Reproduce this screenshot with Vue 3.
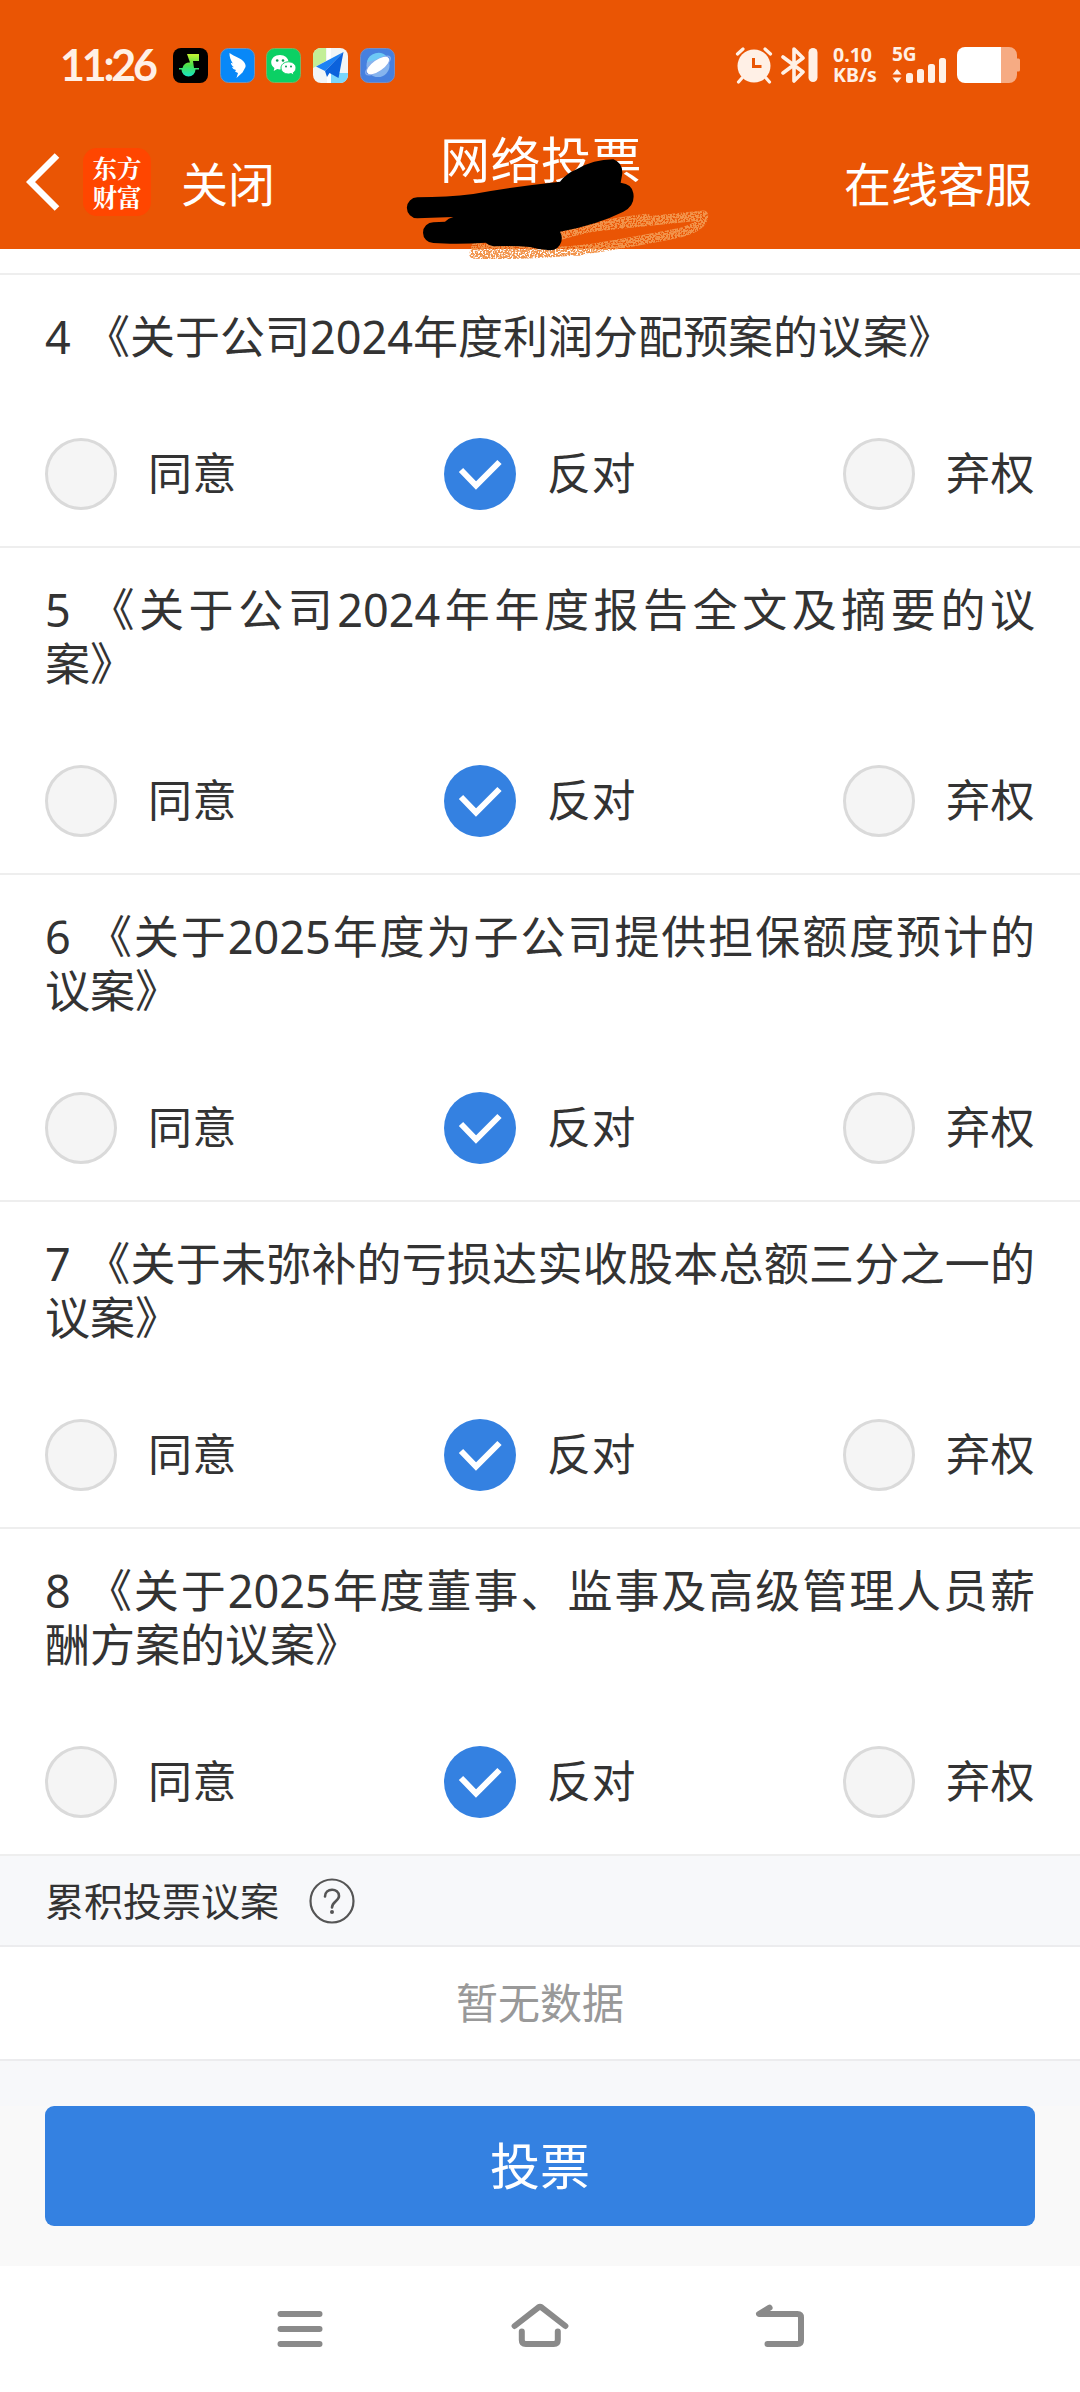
<template>
  <div class="page">
    <header class="header">
      <div class="status">
        <div class="status__left">
          <span class="status__time">11:26</span>
          <div class="status__apps">
            <svg class="app-icon" viewBox="0 0 35 35">
              <defs>
                <linearGradient id="note" x1="0" y1="0" x2="0" y2="1">
                  <stop offset="0" stop-color="#c6f432" />
                  <stop offset="0.5" stop-color="#4be04a" />
                  <stop offset="1" stop-color="#16e6c8" />
                </linearGradient>
              </defs>
              <rect width="35" height="35" rx="8" fill="#000" />
              <path d="M14 6h12v7h-6l1 7h5v1.500h-3.500a7 7 0 0 1-14 0H6V20h3.500a7 7 0 0 1 7.500-5.500z" fill="url(#note)" />
            </svg>
            <svg class="app-icon" viewBox="0 0 35 35">
              <rect x=".5" y=".5" width="34" height="34" rx="8" fill="#0888f8" stroke="#7b8fb0" />
              <path d="M9.500 5c5 3.500 12 5.500 14.500 9 1.500 2 1.800 3.500 1.500 5l-3 5.500-6 5.500 1.500-5-3-1.500 1-1.500c-2-.5-3.500-1.500-4-3l2 .2c-2-1.500-3-3-3.200-4.500l2 .8c-2-3-3.500-7-3.300-10.500z" fill="#fff" />
            </svg>
            <svg class="app-icon" viewBox="0 0 35 35">
              <rect x=".5" y=".5" width="34" height="34" rx="8" fill="#0bd064" stroke="#7fb060" />
              <path d="M14 7c-5 0-8.800 3.200-8.800 7.300 0 2.400 1.200 4.300 3.200 5.600L7.700 23l3.500-1.900c3 .7 5.800.1 8-1.600 2-1.500 3.300-3.200 3.300-5.400C22.500 10.200 18.800 7 14 7z" fill="#fff" />
              <path d="M22.500 13.800c-4.200 0-7.500 2.700-7.500 6.100s3.300 6.100 7.500 6.100c.9 0 1.800-.1 2.600-.4l2.900 1.500-.7-2.500c1.700-1.200 2.700-2.800 2.700-4.700 0-3.400-3.300-6.100-7.500-6.100z" fill="#fff" stroke="#0bd064" />
              <g fill="#0a9c50">
                <circle cx="11.200" cy="12.500" r="1.300" />
                <circle cx="17" cy="12.500" r="1.300" />
                <circle cx="20" cy="18.500" r="1" />
                <circle cx="25" cy="18.500" r="1" />
              </g>
            </svg>
            <svg class="app-icon" viewBox="0 0 35 35">
              <rect width="35" height="35" rx="8" fill="#f2f5f6" />
              <path d="M8 0h5v13L0 20V8a8 8 0 0 1 8-8z" fill="#c3ef98" />
              <path d="M18 25h17v2a8 8 0 0 1-8 8h-9z" fill="#7ad6fb" />
              <path d="M14 0h4v35h-4z" fill="#fff" />
              <path d="M30.500 4L3 18.500l9 4.500z" fill="#1c82f4" />
              <path d="M30.500 4L12 23l2 6 2.500-4 9 5z" fill="#0b62dc" />
            </svg>
            <svg class="app-icon" viewBox="0 0 35 35">
              <rect x=".5" y=".5" width="34" height="34" rx="8" fill="#4680df" stroke="#7a8cc0" />
              <circle cx="18" cy="17.500" r="11.500" fill="#86b4ee" />
              <path d="M7 14a11.500 11.500 0 0 1 20-5z" fill="#6dc9f5" />
              <ellipse cx="18" cy="17.500" rx="14.500" ry="5" transform="rotate(-35 18 17.500)" fill="none" stroke="#86a9ec" stroke-width="1.500" />
              <ellipse cx="18" cy="17.500" rx="13" ry="5.500" transform="rotate(-35 18 17.500)" fill="#fff" />
            </svg>
          </div>
        </div>
        <div class="status__right">
          <svg class="status__alarm" viewBox="0 0 38 38" fill="none" stroke="#fff0e6" stroke-linecap="round">
            <circle cx="19" cy="20" r="16.500" fill="#fff0e6" stroke="none" />
            <path d="M2.500 8L8 3M35.500 8L30 3M7 32l-3.500 4M31 32l3.500 4" stroke-width="3.200" />
            <path d="M18.500 12v8.500h8" stroke="#ea5504" stroke-width="3" stroke-linecap="butt" />
          </svg>
          <svg class="status__bt" viewBox="0 0 38 38" fill="none" stroke="#fff0e6" stroke-width="3.600" stroke-linejoin="round" stroke-linecap="round">
            <path d="M2 11l20 15-9 9V3l9 9L2 27" />
            <path d="M32 6.500v25" stroke-width="9" />
          </svg>
          <div class="status__speed"><span>0.10</span><span>KB/s</span></div>
          <div class="status__signal">
            <span class="status__net">5G</span>
            <svg viewBox="0 0 56 38" fill="#fff0e6">
              <path d="M5 23l4.500 5.500h-9zM5 37l4.500-5.500h-9z" />
              <rect x="14" y="27" width="7" height="10" rx="2.500" />
              <rect x="25" y="23" width="7" height="14" rx="2.500" />
              <rect x="36" y="18" width="7" height="19" rx="2.500" />
              <rect x="47" y="12" width="7" height="25" rx="2.500" />
            </svg>
          </div>
          <svg class="status__battery" viewBox="0 0 63 36">
            <path d="M44 0h8a8 8 0 0 1 8 8v3.500h1.500A1.500 1.500 0 0 1 63 13v10a1.500 1.500 0 0 1-1.500 1.500H60V28a8 8 0 0 1-8 8h-8z" fill="#f6ab83" />
            <path d="M8 0h36v36H8a8 8 0 0 1-8-8V8a8 8 0 0 1 8-8z" fill="#fff" />
          </svg>
        </div>
      </div>

      <nav class="bar">
        <div class="bar__left">
          <svg class="bar__back" viewBox="0 0 34 58" fill="none" stroke="#fff" stroke-width="6.500">
            <path d="M31 2.500L4.500 29 31 55.500" />
          </svg>
          <div class="bar__logo"><span>东方</span><span>财富</span></div>
          <span class="bar__text">关闭</span>
        </div>
        <h1 class="bar__title">网络投票</h1>
        <span class="bar__text">在线客服</span>
      </nav>

      <svg class="scribble" viewBox="0 0 1080 510">
        <defs>
          <filter id="crayon" x="-5%" y="-20%" width="110%" height="140%">
            <feTurbulence type="fractalNoise" baseFrequency="0.2" numOctaves="2" seed="4" />
            <feColorMatrix values="0 0 0 0 0  0 0 0 0 0  0 0 0 0 0  0 7 0 0 -2.600" />
            <feComposite in="SourceGraphic" operator="in" />
          </filter>
        </defs>
        <g filter="url(#crayon)" fill="none" stroke="#f2944c" stroke-linecap="round" stroke-linejoin="round">
          <path d="M540 376Q640 345 800 325" stroke-width="28" />
          <path d="M620 352Q760 338 970 316Q972 348 900 368Q780 392 640 415Q480 436 282 432" stroke-width="29" />
          <path d="M286 412Q400 420 600 424" stroke-width="26" />
        </g>
        <path
          d="M112 262Q200 262 280 252Q400 230 540 215Q560 190 590 178Q640 148 700 148Q728 158 727 190L722 218Q757 222 760 250Q766 288 730 305Q650 345 540 365Q548 378 544 395Q536 420 510 421Q480 420 450 411Q400 407 340 409Q325 405 317 398Q260 402 210 401L160 399A31 31 0 0 1 160 337L195 335Q205 325 220 321L112 325A31 31 0 0 1 112 262Z"
          fill="#000"
        />
      </svg>
    </header>

    <main class="content">
      <section v-for="item in proposals" :key="item.no" class="proposal">
        <p class="proposal__title">{{ item.no }} {{ item.title }}</p>
        <div class="proposal__options">
          <div
            v-for="option in options"
            :key="option"
            class="option"
            role="radio"
            :aria-checked="item.vote === option"
            @click="item.vote = option"
          >
            <span class="option__radio" :class="{ 'option__radio--checked': item.vote === option }">
              <svg v-if="item.vote === option" viewBox="0 0 72 72" fill="none" stroke="#fff" stroke-width="6">
                <path d="M17 32l15 15.500L55.500 24" />
              </svg>
            </span>
            <span class="option__label">{{ option }}</span>
          </div>
        </div>
      </section>

      <div class="group">
        <span>累积投票议案</span>
        <svg class="group__help" viewBox="0 0 46 46" fill="none" stroke="#555" stroke-width="2.200">
          <circle cx="23" cy="23" r="21.500" />
          <path d="M16 18.500c0-9 14-9 14-.5 0 5-7 5.500-7 11.500" stroke-width="2.600" stroke-linecap="round" />
          <circle cx="23" cy="34" r="2" fill="#555" stroke="none" />
        </svg>
      </div>
      <div class="empty">暂无数据</div>
    </main>

    <footer class="footer">
      <button class="footer__submit" type="button">投票</button>
    </footer>

    <div class="sysnav">
      <svg viewBox="0 0 60 60"><path d="M10.500 14h39M10.500 29h39M10.500 44h39" /></svg>
      <svg viewBox="0 0 60 60">
        <path d="M4.600 26L28.500 7.300q1.500-1 3 0L55.400 26M11.800 31.500V40q0 4 4 4h28q4 0 4-4v-8.500" />
      </svg>
      <svg viewBox="0 0 60 60"><path d="M19.600 7.700L9 14h38.500q3.500 0 3.500 3.500v23q0 3.500-3.500 3.500h-30" /></svg>
    </div>
  </div>
</template>

<script setup>
import { ref } from 'vue'

const options = ['同意', '反对', '弃权']

const proposals = ref([
  { no: 4, title: '《关于公司2024年度利润分配预案的议案》', vote: '反对' },
  { no: 5, title: '《关于公司2024年年度报告全文及摘要的议案》', vote: '反对' },
  { no: 6, title: '《关于2025年度为子公司提供担保额度预计的议案》', vote: '反对' },
  { no: 7, title: '《关于未弥补的亏损达实收股本总额三分之一的议案》', vote: '反对' },
  { no: 8, title: '《关于2025年度董事、监事及高级管理人员薪酬方案的议案》', vote: '反对' }
])
</script>

<style>
body {
  margin: 0;
  background: #fff;
}
</style>

<style scoped>
.page {
  width: 1080px;
  height: 2392px;
  display: flex;
  flex-direction: column;
  overflow: hidden;
  background: #fff;
  color: #333;
  font-family: 'Noto Sans', 'Noto Sans CJK SC', sans-serif;
}

/* Header */
.header {
  position: relative;
  height: 249px;
  flex-shrink: 0;
  background: #ea5504;
  color: #fff;
}

.status {
  display: flex;
  justify-content: space-between;
  padding: 47px 60px 0 60px;
  height: 36px;
  color: #fff0e6;
}

.status__left,
.status__right {
  display: flex;
  align-items: center;
}

.status__time {
  width: 113px;
  font-family: Lato, sans-serif;
  font-size: 43px;
  font-weight: 700;
  line-height: 36px;
  letter-spacing: -3.2px;
}

.status__apps {
  display: flex;
  gap: 11.7px;
}

.app-icon {
  width: 35px;
  height: 35px;
}

.status__alarm {
  width: 38px;
  height: 38px;
}

.status__bt {
  width: 38px;
  height: 38px;
  margin-left: 8px;
}

.status__speed {
  display: flex;
  flex-direction: column;
  width: 45px;
  margin-left: 14px;
  font-size: 19.5px;
  font-weight: 700;
  line-height: 20px;
  white-space: nowrap;
}

.status__signal {
  position: relative;
  width: 56px;
  height: 38px;
  margin-left: 14px;
}

.status__signal svg {
  display: block;
  width: 56px;
  height: 38px;
}

.status__net {
  position: absolute;
  top: -1px;
  left: 0;
  font-size: 19px;
  font-weight: 700;
  line-height: 18px;
}

.status__battery {
  width: 63px;
  height: 36px;
  margin-left: 9px;
}

.bar {
  display: flex;
  justify-content: space-between;
  align-items: center;
  height: 70px;
  padding: 64px 48px 0 26px;
}

.bar__left {
  display: flex;
  align-items: center;
  width: 414px;
}

.bar__back {
  width: 34px;
  height: 58px;
}

.bar__logo {
  display: flex;
  flex-direction: column;
  align-items: center;
  justify-content: center;
  width: 68px;
  height: 68px;
  margin: 0 30px 0 23px;
  border-radius: 14px;
  background: #ff4600;
  font-family: 'Noto Serif CJK SC', 'Noto Sans CJK SC', sans-serif;
  font-size: 24.5px;
  font-weight: 700;
  line-height: 29px;
}

.bar__text {
  padding-top: 3px;
  font-size: 47px;
  line-height: 56px;
}

.bar__title {
  margin: 0 auto 45px 0;
  font-size: 50px;
  font-weight: 400;
  line-height: 56px;
  letter-spacing: 0.5px;
}

.scribble {
  position: absolute;
  top: 110px;
  left: 380px;
  width: 360px;
  height: 170px;
}

/* Proposal list */
.content {
  padding-top: 24px;
}

.content::before {
  content: '';
  display: block;
  height: 2px;
  background: #eee;
}

.proposal {
  padding: 35px 45px 36px;
  border-bottom: 2px solid #eee;
}

.proposal__title {
  margin: 0 0 74px;
  font-size: 45px;
  line-height: 54px;
  word-spacing: 2.5px;
  text-align: justify;
  text-spacing-trim: space-all;
}

.proposal__options {
  display: flex;
  justify-content: space-between;
}

.option {
  display: flex;
  align-items: center;
  gap: 31px;
  cursor: pointer;
}

.option__radio {
  box-sizing: border-box;
  width: 72px;
  height: 72px;
  border: 3px solid #dadada;
  border-radius: 50%;
  background: #f5f5f5;
}

.option__radio--checked {
  border: none;
  background: #3481e1;
}

.option__radio svg {
  display: block;
  width: 72px;
  height: 72px;
}

.option__label {
  height: 72px;
  font-size: 44px;
  line-height: 70px;
  letter-spacing: 0.5px;
}

/* Cumulative voting group */
.group {
  display: flex;
  align-items: center;
  height: 89px;
  padding: 0 45px;
  gap: 30px;
  border-bottom: 2px solid #ececee;
  background: #f7f8fa;
  font-size: 39px;
  line-height: 60px;
}

.group__help {
  width: 46px;
  height: 46px;
}

.empty {
  height: 112px;
  border-bottom: 2px solid #ececee;
  color: #999;
  font-size: 42px;
  line-height: 112px;
  text-align: center;
}

/* Submit */
.footer {
  height: 160px;
  padding-top: 45px;
  background: linear-gradient(#f7f8fa 45px, #f9f9f9 45px);
  text-align: center;
}

.footer__submit {
  width: 990px;
  height: 120px;
  padding: 0;
  border: none;
  border-radius: 9px;
  background: #3481e1;
  color: #fff;
  font-family: inherit;
  font-size: 50px;
  line-height: 120px;
}

.sysnav {
  display: flex;
  justify-content: center;
  gap: 180px;
  padding-top: 34px;
}

.sysnav svg {
  width: 60px;
  height: 60px;
  fill: none;
  stroke: #8a8a8a;
  stroke-width: 6;
  stroke-linecap: round;
  stroke-linejoin: round;
}
</style>
